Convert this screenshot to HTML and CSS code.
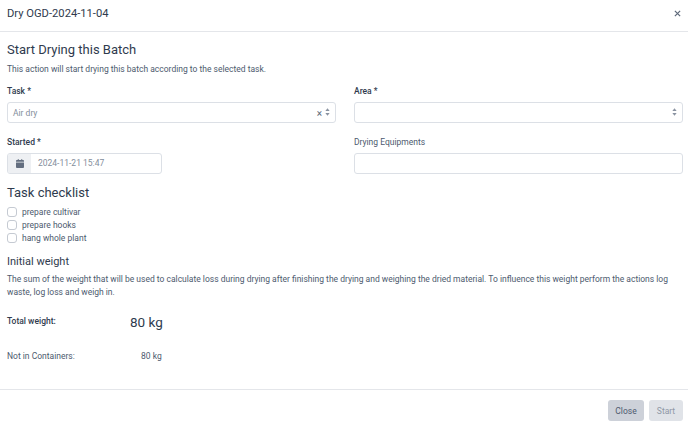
FILE: index.html
```html
<!DOCTYPE html>
<html lang="en">
<head>
<meta charset="utf-8">
<title>Dry OGD-2024-11-04</title>
<link rel="stylesheet" href="styles.css">
</head>
<body>
<div class="modal">
  <header class="modal-header">
    <h1 class="modal-title">Dry OGD-2024-11-04</h1>
    <svg class="close-icon" viewBox="0 0 8 8" aria-hidden="true"><path d="M1 1l6 6M7 1L1 7"/></svg>
  </header>
  <main class="modal-body">
    <h2 class="section-title">Start Drying this Batch</h2>
    <p class="lead">This action will start drying this batch according to the selected task.</p>
    <div class="form-grid">
      <div class="field">
        <label class="label label-strong">Task *</label>
        <div class="select">
          <span class="select-value">Air dry</span>
          <span class="select-clear">×</span>
          <svg class="sort-icon" viewBox="0 0 6 9" aria-hidden="true"><path d="M3 0l2.6 3.4H.4zM3 9L.4 5.6h5.2z"/></svg>
        </div>
      </div>
      <div class="field">
        <label class="label label-strong">Area *</label>
        <div class="select">
          <span class="select-value"></span>
          <svg class="sort-icon" viewBox="0 0 6 9" aria-hidden="true"><path d="M3 0l2.6 3.4H.4zM3 9L.4 5.6h5.2z"/></svg>
        </div>
      </div>
      <div class="field">
        <label class="label label-strong">Started *</label>
        <div class="date-group">
          <span class="date-addon">
            <svg class="calendar-icon" viewBox="0 0 9 10" aria-hidden="true"><path d="M2 0h1v1h3V0h1v1h1a1 1 0 0 1 1 1v1H0V2a1 1 0 0 1 1-1h1zM0 4h9v5a1 1 0 0 1-1 1H1a1 1 0 0 1-1-1z"/></svg>
          </span>
          <span class="date-value">2024-11-21 15:47</span>
        </div>
      </div>
      <div class="field">
        <label class="label">Drying Equipments</label>
        <div class="select"></div>
      </div>
    </div>
    <h2 class="section-title checklist-title">Task checklist</h2>
    <ul class="checklist">
      <li class="check-item"><span class="checkbox"></span>prepare cultivar</li>
      <li class="check-item"><span class="checkbox"></span>prepare hooks</li>
      <li class="check-item"><span class="checkbox"></span>hang whole plant</li>
    </ul>
    <h3 class="subtitle">Initial weight</h3>
    <p class="description">The sum of the weight that will be used to calculate loss during drying after finishing the drying and weighing the dried material. To influence this weight perform the actions log waste, log loss and weigh in.</p>
    <div class="total-row">
      <span class="total-label">Total weight:</span>
      <span class="total-value">80 kg</span>
    </div>
    <div class="sub-row">
      <span class="sub-label">Not in Containers:</span>
      <span class="sub-value">80 kg</span>
    </div>
  </main>
  <footer class="modal-footer">
    <button class="btn btn-close" type="button">Close</button>
    <button class="btn btn-start" type="button" disabled>Start</button>
  </footer>
</div>
</body>
</html>
```

FILE: styles.css
```css
* { box-sizing: border-box; }
html, body { margin: 0; height: 100%; }
body {
  background: #fff;
  color: #354052;
  font-family: Roboto, Lato, sans-serif;
  font-size: 8.5px;
  overflow: hidden;
}
.modal { width: 688px; height: 426px; display: flex; flex-direction: column; }
.modal-header {
  height: 32px;
  border-bottom: 1px solid #e4e6ea;
  padding: 0 7px;
  display: flex;
  align-items: center;
  justify-content: space-between;
}
.modal-title { margin: 0 0 4px; font-size: 11.2px; font-weight: 400; color: #2f3b4e; line-height: 16px; }
.close-icon { width: 7px; height: 7px; margin: 0 0 5px; fill: none; stroke: #5d6879; stroke-width: 1.4; }
.modal-body { flex: 1; padding: 10px 7px 0; }
.section-title { margin: 0; font-size: 13px; font-weight: 400; line-height: 16px; color: #2f3b4e; }
.lead { margin: 5px 0 0; line-height: 13px; color: #4d5a6e; }
.form-grid {
  display: grid;
  grid-template-columns: 329px 329px;
  column-gap: 18px;
  row-gap: 13px;
  margin-top: 9px;
}
.label { display: block; line-height: 12px; margin-bottom: 5px; color: #4d5a6e; }
.label-strong { font-weight: 500; color: #2f3b4e; }
.select {
  height: 21px;
  border: 1px solid #dce0e6;
  border-radius: 3px;
  display: flex;
  align-items: center;
  padding: 0 5px;
}
.select-value { flex: 1; color: #848e9c; }
.select-clear { color: #5d6879; font-size: 10px; margin-right: 3px; line-height: 10px; margin-top: 2px; }
.sort-icon { width: 5px; height: 8px; fill: #8a93a1; margin-top: -1px; }
.date-group {
  width: 155px;
  height: 21px;
  border: 1px solid #dce0e6;
  border-radius: 3px;
  display: flex;
  overflow: hidden;
}
.date-addon {
  width: 23px;
  background: #eef0f3;
  display: flex;
  align-items: center;
  justify-content: center;
}
.calendar-icon { width: 8px; height: 9px; fill: #636e7f; }
.date-value { flex: 1; padding-left: 7px; line-height: 19px; color: #848e9c; }
.checklist-title { margin-top: 11px; }
.checklist { list-style: none; margin: 4px 0 0; padding: 0; }
.check-item { display: flex; align-items: center; height: 13px; color: #4d5a6e; }
.checkbox {
  width: 10px;
  height: 10px;
  border: 1px solid #c5cad2;
  border-radius: 3px;
  margin-right: 5px;
}
.subtitle { margin: 11px 0 0; font-size: 11px; font-weight: 400; line-height: 14px; color: #2f3b4e; }
.description { margin: 4px 0 0; line-height: 12.5px; color: #4d5a6e; }
.total-row { display: flex; align-items: center; margin-top: 14px; height: 20px; }
.total-label { width: 123px; font-weight: 500; color: #2f3b4e; margin-top: -3px; }
.total-value { font-size: 13.5px; font-weight: 400; color: #2f3b4e; }
.sub-row { display: flex; margin-top: 18px; line-height: 13px; color: #4d5a6e; }
.sub-label { width: 134px; }
.modal-footer {
  height: 37px;
  border-top: 1px solid #e4e6ea;
  display: flex;
  justify-content: flex-end;
  gap: 5px;
  padding: 10px 5px 0;
}
.btn {
  height: 21px;
  border: 0;
  border-radius: 3px;
  font: inherit;
  padding: 0;
}
.btn-close { width: 36px; background: #cdd1d9; color: #4d5a6e; }
.btn-start { width: 34px; background: #e0e3e8; color: #8f98a6; }
```
